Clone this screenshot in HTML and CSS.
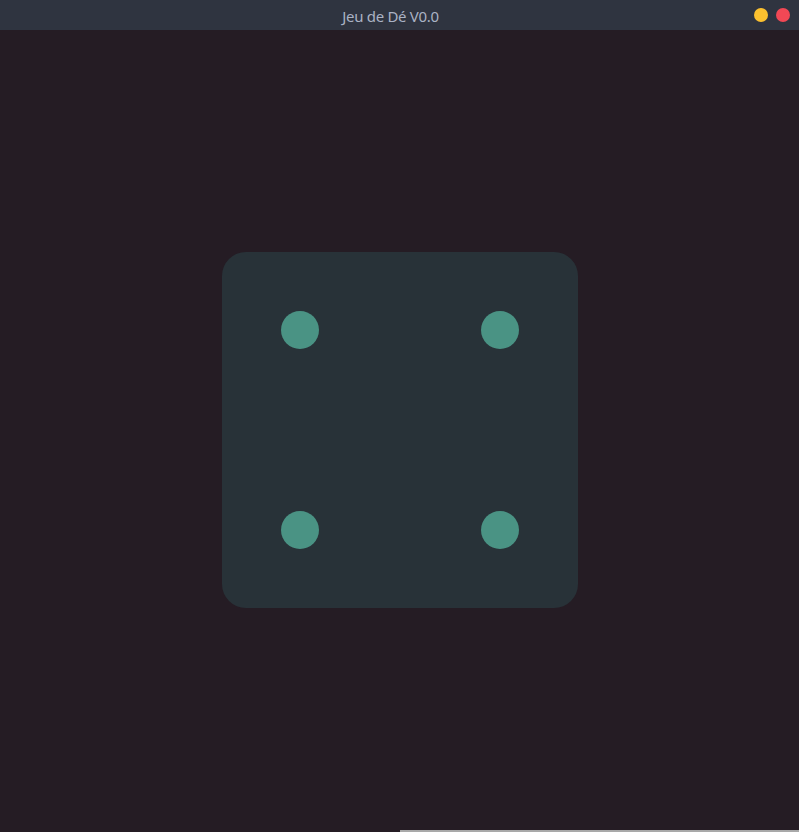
FILE: index.html
```html
<!DOCTYPE html>
<html lang="fr">
<head>
<meta charset="utf-8">
<title>Jeu de Dé V0.0</title>
<link rel="stylesheet" href="styles.css">
</head>
<body>
<div class="window">
  <header class="titlebar">
    <span class="title">Jeu de Dé V0.0</span>
    <div class="controls">
      <span class="btn btn-min"></span>
      <span class="btn btn-close"></span>
    </div>
  </header>
  <main class="stage">
    <div class="die">
      <span class="pip"></span>
      <span class="pip"></span>
      <span class="pip"></span>
      <span class="pip"></span>
    </div>
  </main>
  <div class="statusline">
    <div class="status-empty"></div>
    <div class="status-fill"></div>
  </div>
</div>
</body>
</html>
```
FILE: styles.css
```css
html, body {
  margin: 0;
  padding: 0;
  background: #251c24;
}
.window {
  width: 799px;
  height: 832px;
  display: flex;
  flex-direction: column;
  overflow: hidden;
}
.titlebar {
  height: 30px;
  flex: 0 0 30px;
  box-sizing: border-box;
  padding-right: 18px;
  padding-top: 1px;
  background: #2f3440;
  position: relative;
  display: flex;
  align-items: center;
  justify-content: center;
}
.title {
  font-family: "Noto Sans", "DejaVu Sans", sans-serif;
  font-size: 15px;
  color: #aab2c4;
  letter-spacing: -0.3px;
}
.controls {
  position: absolute;
  right: 9px;
  top: 8px;
  display: flex;
  gap: 8px;
}
.btn {
  width: 14px;
  height: 14px;
  border-radius: 50%;
  display: block;
}
.btn-min { background: #fcc12f; }
.btn-close { background: #f24855; }
.stage {
  flex: 1;
  display: flex;
  align-items: center;
  justify-content: center;
}
.die {
  width: 356px;
  height: 356px;
  box-sizing: border-box;
  background: #283238;
  border-radius: 24px;
  padding: 59px;
  display: grid;
  grid-template-columns: 38px 38px;
  grid-template-rows: 38px 38px;
  justify-content: space-between;
  align-content: space-between;
}
.pip {
  width: 38px;
  height: 38px;
  border-radius: 50%;
  background: #4a9384;
}
.statusline {
  flex: 0 0 2px;
  display: flex;
}
.status-empty { flex: 0 0 400px; }
.status-fill { flex: 1; background: #a9a9a9; }
```
